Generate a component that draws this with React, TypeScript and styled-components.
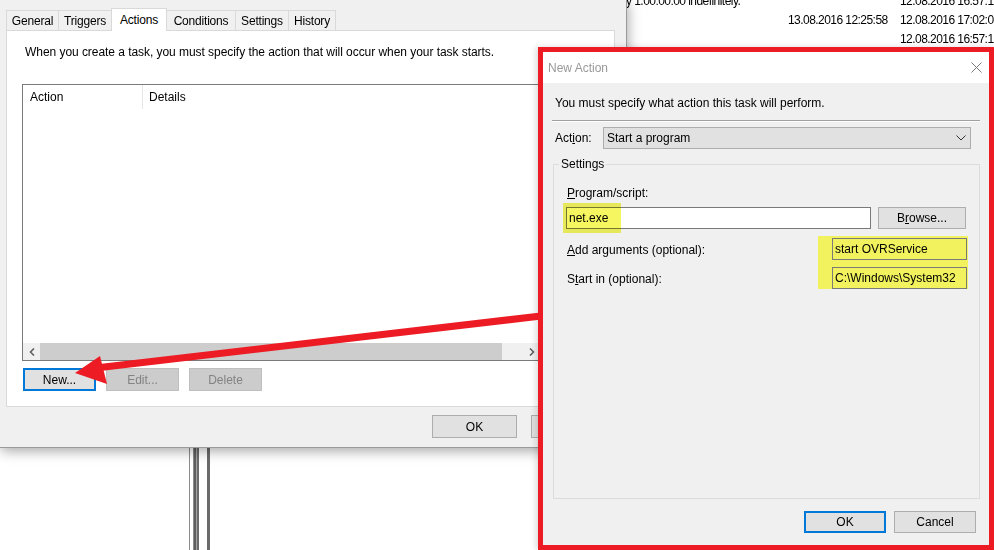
import styled, { createGlobalStyle } from "styled-components";

const GlobalStyle = createGlobalStyle`
  html, body { margin: 0; padding: 0; background: #fff; }
  body {
    font-family: "Liberation Sans", Arial, sans-serif;
    font-size: 12px;
    color: #000;
  }
  * { box-sizing: border-box; }
`;

const tabs = [
  { label: "General", w: 53 },
  { label: "Triggers", w: 54 },
  { label: "Actions", w: 56, active: true },
  { label: "Conditions", w: 70 },
  { label: "Settings", w: 54 },
  { label: "History", w: 48 },
];

const backRows = [
  ["y 1.00:00:00 indefinitely.", "", "12.08.2016 16:57:15"],
  ["", "13.08.2016 12:25:58", "12.08.2016 17:02:09"],
  ["", "", "12.08.2016 16:57:15"],
];

export default function App() {
  return (
    <Desktop>
      <GlobalStyle />
      <Background>
        <div />
        <Stripes>
          <Stripe $w={1} $c="#8c8c8c" />
          <Gap $w={3} />
          <StripeBand />
          <Gap $w={8} />
          <Stripe $w={3} $c="#6a6a6a" />
        </Stripes>
        <BackRows>
          {backRows.map((r, i) =>
            r.map((c, j) => <BackCell key={i + "-" + j}>{c}</BackCell>)
          )}
        </BackRows>
      </Background>

      <PropsDialog>
        <TabStrip>
          {tabs.map((t) => (
            <Tab key={t.label} $w={t.w} $active={t.active}>
              {t.label}
            </Tab>
          ))}
        </TabStrip>
        <TabPanel>
          <Intro>
            When you create a task, you must specify the action that will occur
            when your task starts.
          </Intro>
          <ListView>
            <ListHeader>
              <HeaderCell $w={120} $divider>
                Action
              </HeaderCell>
              <HeaderCell>Details</HeaderCell>
            </ListHeader>
            <ListBody />
            <HScroll>
              <ScrollArrow>
                <svg width="6" height="8" viewBox="0 0 6 8">
                  <polyline points="5,0.5 1.5,4 5,7.5" fill="none" stroke="#606060" strokeWidth="1.6" />
                </svg>
              </ScrollArrow>
              <Thumb />
              <Track />
              <ScrollArrow>
                <svg width="6" height="8" viewBox="0 0 6 8">
                  <polyline points="1,0.5 4.5,4 1,7.5" fill="none" stroke="#606060" strokeWidth="1.6" />
                </svg>
              </ScrollArrow>
            </HScroll>
          </ListView>
          <ButtonRow>
            <Button $w={73} $h={23} $variant="primary">New...</Button>
            <Button $w={73} $h={23} $variant="disabled">Edit...</Button>
            <Button $w={73} $h={23} $variant="disabled">Delete</Button>
          </ButtonRow>
        </TabPanel>
        <DialogFooter>
          <Button $w={85} $h={23}>OK</Button>
          <Button $w={85} $h={23}>Cancel</Button>
        </DialogFooter>
      </PropsDialog>

      <ActionDialog>
        <TitleBar>
          <span>New Action</span>
          <svg width="11" height="11" viewBox="0 0 11 11">
            <path d="M0.5 0.5 L10.5 10.5 M10.5 0.5 L0.5 10.5" stroke="#7a7a7a" strokeWidth="1" />
          </svg>
        </TitleBar>
        <DialogBody>
          <BodyText>You must specify what action this task will perform.</BodyText>
          <Separator />
          <ActionRow>
            <span>
              Act<u>i</u>on:
            </span>
            <Select>
              <span>Start a program</span>
              <svg width="10" height="6" viewBox="0 0 10 6">
                <polyline points="0.5,0.5 5,5 9.5,0.5" fill="none" stroke="#333" strokeWidth="1" />
              </svg>
            </Select>
          </ActionRow>
          <Group>
            <Legend>Settings</Legend>
            <FieldLabel $top={13}>
              <u>P</u>rogram/script:
            </FieldLabel>
            <ProgramRow>
              <Field $bg="#fff">
                net.exe
                <Marker />
              </Field>
              <Button $w={88} $h={22}>
                B<u>r</u>owse...
              </Button>
            </ProgramRow>
            <ArgsBlock>
              <ArgLabels>
                <FieldLabel>
                  <u>A</u>dd arguments (optional):
                </FieldLabel>
                <FieldLabel>
                  S<u>t</u>art in (optional):
                </FieldLabel>
              </ArgLabels>
              <Highlight>
                <Field $bg="transparent">start OVRService</Field>
                <Field $bg="transparent">C:\Windows\System32</Field>
              </Highlight>
            </ArgsBlock>
          </Group>
          <DialogButtons>
            <Button $w={82} $h={22} $variant="primary">OK</Button>
            <Button $w={82} $h={22}>Cancel</Button>
          </DialogButtons>
        </DialogBody>
      </ActionDialog>

      <ArrowLayer width="994" height="550" viewBox="0 0 994 550">
        <line x1="541" y1="316" x2="100" y2="367.5" stroke="#ed1c24" strokeWidth="7" />
        <polygon points="75,373 100,356 107,384" fill="#ed1c24" />
      </ArrowLayer>
    </Desktop>
  );
}

const Desktop = styled.div`
  position: relative;
  width: 994px;
  height: 550px;
  overflow: hidden;
  background: #fff;
`;

const Background = styled.div`
  position: absolute;
  inset: 0;
  display: grid;
  grid-template-columns: 189px 21px 1fr;
  background: #fff;
`;

const Stripes = styled.div`
  display: flex;
  height: 100%;
`;

const Stripe = styled.div<{ $w: number; $c: string }>`
  width: ${(p) => p.$w}px;
  background: ${(p) => p.$c};
`;

const Gap = styled.div<{ $w: number }>`
  width: ${(p) => p.$w}px;
`;

const StripeBand = styled.div`
  width: 6px;
  background: linear-gradient(
    to right,
    #8a8a8a 0 1px,
    #5f5f5f 1px 3px,
    #a3a3a3 3px 4px,
    #6a6a6a 4px 6px
  );
`;

const BackRows = styled.div`
  padding-left: 416px;
  margin-top: -8px;
  display: grid;
  grid-template-columns: 162px 112px 1fr;
  grid-auto-rows: 19px;
  align-content: start;
  align-items: center;
  white-space: nowrap;
  overflow: hidden;
  letter-spacing: -0.55px;
`;

const BackCell = styled.div`
  line-height: 19px;
`;

const PropsDialog = styled.div`
  position: absolute;
  left: 0;
  top: 0;
  width: 627px;
  height: 448px;
  background: #f0f0f0;
  border-right: 1px solid #9a9a9a;
  border-bottom: 1px solid #9a9a9a;
  box-shadow: 1px 3px 12px rgba(0, 0, 0, 0.35);
  display: flex;
  flex-direction: column;
`;

const TabStrip = styled.div`
  display: flex;
  align-items: flex-end;
  height: 30px;
  padding-left: 6px;
`;

const Tab = styled.div<{ $w: number; $active?: boolean }>`
  position: relative;
  z-index: ${(p) => (p.$active ? 1 : 0)};
  width: ${(p) => p.$w}px;
  height: ${(p) => (p.$active ? 23 : 20)}px;
  margin-right: -1px;
  margin-bottom: ${(p) => (p.$active ? -1 : 0)}px;
  border: 1px solid #d9d9d9;
  border-bottom: none;
  background: ${(p) => (p.$active ? "#fff" : "#f0f0f0")};
  display: flex;
  align-items: center;
  justify-content: center;
  white-space: nowrap;
  letter-spacing: -0.2px;
`;

const TabPanel = styled.div`
  margin-left: 6px;
  width: 609px;
  height: 377px;
  background: #fff;
  border: 1px solid #d9d9d9;
  padding: 13px 0 0 15px;
  display: flex;
  flex-direction: column;
`;

const Intro = styled.div`
  padding-left: 3px;
  line-height: 16px;
  white-space: nowrap;
  letter-spacing: -0.05px;
`;

const ListView = styled.div`
  margin-top: 24px;
  width: 519px;
  height: 277px;
  border: 1px solid #7a7a7a;
  display: flex;
  flex-direction: column;
  background: #fff;
`;

const ListHeader = styled.div`
  display: flex;
  height: 24px;
`;

const HeaderCell = styled.div<{ $w?: number; $divider?: boolean }>`
  width: ${(p) => (p.$w ? p.$w + "px" : "auto")};
  flex: ${(p) => (p.$w ? "none" : 1)};
  display: flex;
  align-items: center;
  padding-left: ${(p) => (p.$w ? 7 : 6)}px;
  border-right: ${(p) => (p.$divider ? "1px solid #e5e5e5" : "none")};
`;

const ListBody = styled.div`
  flex: 1;
`;

const HScroll = styled.div`
  height: 17px;
  display: flex;
  background: #f0f0f0;
`;

const ScrollArrow = styled.div`
  width: 17px;
  display: flex;
  align-items: center;
  justify-content: center;
`;

const Thumb = styled.div`
  width: 462px;
  background: #cdcdcd;
`;

const Track = styled.div`
  flex: 1;
`;

const ButtonRow = styled.div`
  margin-top: 7px;
  margin-left: 1px;
  display: flex;
  gap: 10px;
`;

const Button = styled.div<{ $w: number; $h: number; $variant?: "primary" | "disabled" }>`
  width: ${(p) => p.$w}px;
  height: ${(p) => p.$h}px;
  background: ${(p) => (p.$variant === "disabled" ? "#cccccc" : "#e1e1e1")};
  border: ${(p) =>
    p.$variant === "primary"
      ? "2px solid #0078d7"
      : p.$variant === "disabled"
      ? "1px solid #bfbfbf"
      : "1px solid #adadad"};
  color: ${(p) => (p.$variant === "disabled" ? "#838383" : "#000")};
  display: flex;
  align-items: center;
  justify-content: center;
  flex: none;
`;

const DialogFooter = styled.div`
  flex: 1;
  display: flex;
  justify-content: flex-end;
  align-items: flex-start;
  gap: 14px;
  padding: 8px 10px 0 0;
`;

const ActionDialog = styled.div`
  position: absolute;
  left: 538px;
  top: 47px;
  width: 456px;
  height: 503px;
  border: 5px solid #ed1c24;
  background: #f0f0f0;
  box-shadow: -2px 0 6px rgba(0, 0, 0, 0.15);
  display: flex;
  flex-direction: column;
`;

const TitleBar = styled.div`
  height: 31px;
  flex: none;
  background: #fff;
  color: #999;
  display: flex;
  align-items: center;
  justify-content: space-between;
  padding: 0 7px 0 5px;
`;

const DialogBody = styled.div`
  flex: 1;
  display: flex;
  flex-direction: column;
  padding: 12px 9px 12px 9px;
`;

const BodyText = styled.div`
  padding-left: 3px;
  line-height: 16px;
`;

const Separator = styled.div`
  margin-top: 9px;
  height: 2px;
  border-top: 1px solid #a0a0a0;
  border-bottom: 1px solid #fff;
`;

const ActionRow = styled.div`
  margin-top: 5px;
  display: flex;
  align-items: center;
  padding: 0 9px 0 3px;
`;

const Select = styled.div`
  margin-left: auto;
  width: 368px;
  height: 22px;
  background: #e1e1e1;
  border: 1px solid #adadad;
  display: flex;
  align-items: center;
  justify-content: space-between;
  padding: 0 4px 0 3px;
`;

const Group = styled.fieldset`
  flex: 1;
  margin: 7px 0 0 1px;
  padding: 0 13px 0 12px;
  border: 1px solid #dcdcdc;
  min-width: 0;
  display: flex;
  flex-direction: column;
`;

const Legend = styled.legend`
  margin-left: -7px;
  padding: 0 2px;
  line-height: 16px;
`;

const FieldLabel = styled.div<{ $top?: number }>`
  margin-top: ${(p) => p.$top || 0}px;
  padding-left: 1px;
  line-height: 16px;
  white-space: nowrap;
`;

const ProgramRow = styled.div`
  margin-top: 6px;
  display: flex;
  gap: 7px;
`;

const Field = styled.div<{ $bg: string }>`
  position: relative;
  flex: 1;
  height: 22px;
  border: 1px solid #7a7a7a;
  background: ${(p) => p.$bg};
  padding-left: 2px;
  display: flex;
  align-items: center;
  white-space: nowrap;
`;

const Marker = styled.span`
  position: absolute;
  left: -4px;
  top: -5px;
  width: 58px;
  height: 30px;
  background: #f6f660;
  mix-blend-mode: multiply;
`;

const ArgsBlock = styled.div`
  margin-top: 7px;
  display: flex;
  justify-content: space-between;
  margin-right: -2px;
`;

const ArgLabels = styled.div`
  display: flex;
  flex-direction: column;
  gap: 13px;
  padding-top: 6px;
`;

const Highlight = styled.div`
  width: 150px;
  height: 53px;
  background: #f2f25e;
  padding: 2px 1px 0 14px;
  display: flex;
  flex-direction: column;
  gap: 7px;
`;

const DialogButtons = styled.div`
  margin-top: 12px;
  display: flex;
  justify-content: flex-end;
  gap: 8px;
  padding-right: 4px;
`;

const ArrowLayer = styled.svg`
  position: absolute;
  left: 0;
  top: 0;
  pointer-events: none;
  z-index: 10;
`;
